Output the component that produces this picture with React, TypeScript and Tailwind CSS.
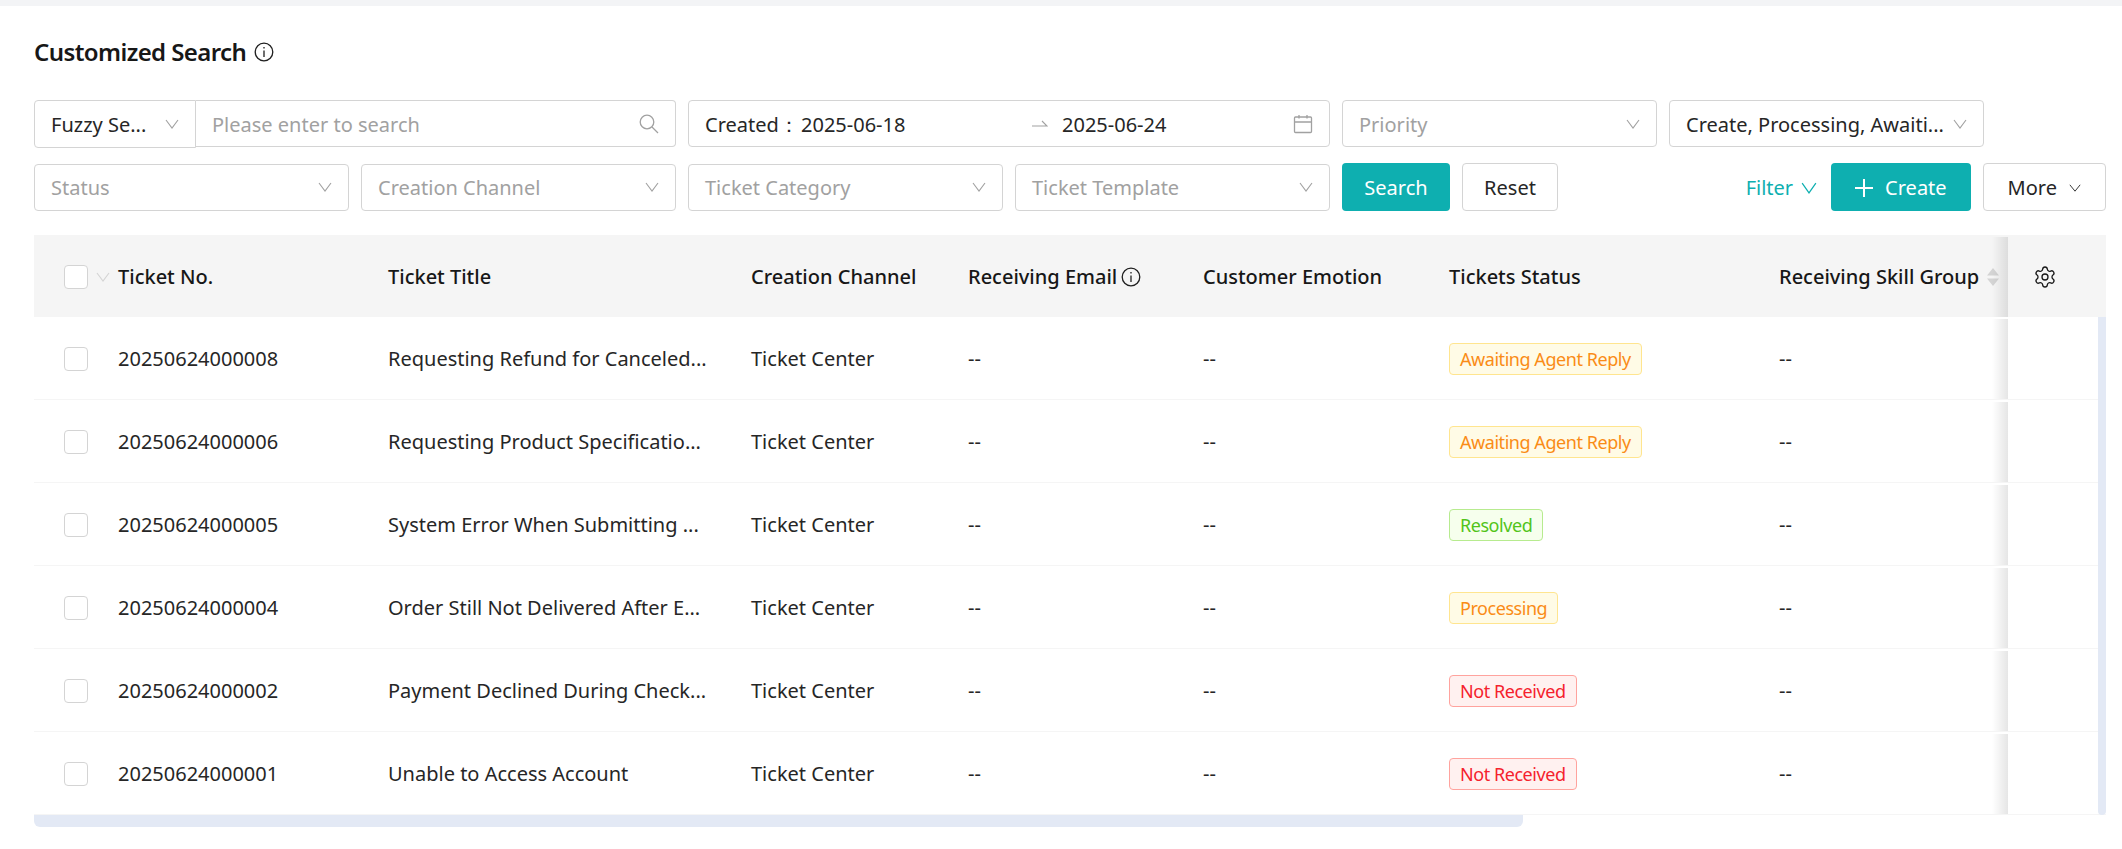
import { Settings } from "lucide-react";

const COLS = "grid grid-cols-[84px_270px_363px_217px_235px_246px_330px_229px_98px]";

function Chevron({ className = "h-2.5 w-3.5 text-neutral-400" }: { className?: string }) {
  return (
    <svg viewBox="0 0 14 10" preserveAspectRatio="none" className={"shrink-0 " + className} fill="none" stroke="currentColor" strokeWidth="1.1">
      <path d="M1 1 L7 9 L13 1" />
    </svg>
  );
}

function Info() {
  return (
    <svg viewBox="0 0 20 20" className="size-5 shrink-0" fill="none" stroke="#1f1f1f" strokeWidth="1.3">
      <circle cx="10" cy="10" r="8.8" />
      <path d="M10 8.5 V15" />
      <path d="M10 5 V6.6" />
    </svg>
  );
}

function Field({ text, placeholder = true }: { text: string; placeholder?: boolean }) {
  return (
    <div className="flex h-[47px] items-center gap-2 rounded border border-neutral-300 bg-white px-4 text-xl">
      <span className={"flex-1 whitespace-nowrap pt-0.5 " + (placeholder ? "text-neutral-400" : "text-neutral-800")}>{text}</span>
      <Chevron />
    </div>
  );
}

function Tag({ text, tone }: { text: string; tone: "warn" | "ok" | "bad" }) {
  const cls = {
    warn: "bg-[#fffbe6] border-[#ffe58f] text-[#fa8c16]",
    ok: "bg-[#f6ffed] border-[#b7eb8f] text-[#52c41a]",
    bad: "bg-[#fff1f0] border-[#ffa39e] text-[#f5222d]",
  }[tone];
  return <span className={"inline-flex h-8 items-center rounded-sm border px-2.5 text-lg tracking-tight " + cls}>{text}</span>;
}

const rows: { no: string; title: string; status: string; tone: "warn" | "ok" | "bad" }[] = [
  { no: "20250624000008", title: "Requesting Refund for Canceled...", status: "Awaiting Agent Reply", tone: "warn" },
  { no: "20250624000006", title: "Requesting Product Specificatio...", status: "Awaiting Agent Reply", tone: "warn" },
  { no: "20250624000005", title: "System Error When Submitting ...", status: "Resolved", tone: "ok" },
  { no: "20250624000004", title: "Order Still Not Delivered After E...", status: "Processing", tone: "warn" },
  { no: "20250624000002", title: "Payment Declined During Check...", status: "Not Received", tone: "bad" },
  { no: "20250624000001", title: "Unable to Access Account", status: "Not Received", tone: "bad" },
];

function StickyEdge() {
  return <span className="absolute inset-y-0 -left-4 w-4 bg-gradient-to-r from-transparent to-black/10" />;
}

export default function App() {
  return (
    <div className="min-h-screen bg-white font-['Noto_Sans',sans-serif] text-neutral-800">
      <div className="h-1.5 bg-gray-100" />
      <div className="pl-8.5 pr-4 pt-7.5">
        <div className="mb-8 flex h-8 items-center gap-2 text-2xl font-semibold tracking-tight text-neutral-900">
          <span>Customized Search</span>
          <Info />
        </div>

        <div className="grid grid-cols-[repeat(6,315px)_1fr] items-center gap-x-3 gap-y-4">
          <div className="col-span-2 flex h-[47px] items-start">
            <div className="flex h-12 w-[162px] shrink-0 items-center gap-2 rounded-l border border-neutral-300 px-4 text-xl">
              <span className="flex-1 whitespace-nowrap pt-0.5">Fuzzy Se...</span>
              <Chevron />
            </div>
            <div className="flex h-[47px] flex-1 items-center rounded-r border border-l-0 border-neutral-300 px-4 text-xl">
              <span className="flex-1 pt-0.5 text-neutral-400">Please enter to search</span>
              <svg viewBox="0 0 20 20" className="size-5 shrink-0 text-neutral-400" fill="none" stroke="currentColor" strokeWidth="1.3">
                <circle cx="8" cy="8" r="6.8" />
                <path d="M13 13 L19 19" />
              </svg>
            </div>
          </div>

          <div className="col-span-2 flex h-[47px] items-center rounded border border-neutral-300 px-4 text-xl">
            <span className="w-24 shrink-0 pt-0.5">Created：</span>
            <span className="flex-1 pt-0.5">2025-06-18</span>
            <svg viewBox="0 0 16 8" className="mr-3.5 h-2 w-4 shrink-0 text-neutral-400" fill="none" stroke="currentColor" strokeWidth="1.1">
              <path d="M0 6 H15 L10 1" />
            </svg>
            <span className="flex-1 pt-0.5">2025-06-24</span>
            <svg viewBox="0 0 20 20" className="size-5 shrink-0 text-neutral-400" fill="none" stroke="currentColor" strokeWidth="1.3">
              <rect x="1.5" y="3" width="17" height="15.5" rx="1" />
              <path d="M1.5 8 H18.5 M6 1 V4.5 M14 1 V4.5" />
            </svg>
          </div>

          <Field text="Priority" />
          <Field text="Create, Processing, Awaiti..." placeholder={false} />
          <div />

          <Field text="Status" />
          <Field text="Creation Channel" />
          <Field text="Ticket Category" />
          <Field text="Ticket Template" />

          <div className="flex h-12 gap-3 text-xl">
            <button className="w-27 rounded bg-[#0eafb0] pt-0.5 text-white">Search</button>
            <button className="w-24 rounded border border-neutral-300 bg-white pt-0.5">Reset</button>
          </div>

          <div className="col-span-2 flex h-12 items-center justify-end gap-3 text-xl">
            <span className="mr-0.5 flex items-center gap-2 pt-0.5 text-[#0eafb0]">
              Filter
              <Chevron className="h-3 w-4 text-[#0eafb0]" />
            </span>
            <button className="flex h-12 items-center justify-center gap-3 rounded bg-[#0eafb0] px-6 pt-0.5 text-white">
              <svg viewBox="0 0 16 16" className="size-4.5 shrink-0" fill="none" stroke="currentColor" strokeWidth="1.8">
                <path d="M8 0 V16 M0 8 H16" />
              </svg>
              Create
            </button>
            <button className="flex h-12 items-center justify-center gap-3 rounded border border-neutral-300 bg-white px-6 pt-0.5">
              More
              <Chevron className="h-2 w-3 text-neutral-800" />
            </button>
          </div>
        </div>

        <div className="mt-6">
          <div className={COLS + " h-[82px] items-center bg-neutral-100 pt-0.5 text-xl font-medium text-neutral-900"}>
            <div className="flex items-center gap-2 pl-7.5">
              <span className="size-6 shrink-0 rounded border border-neutral-300 bg-white" />
              <Chevron className="h-2.5 w-3.5 text-neutral-300" />
            </div>
            <div>Ticket No.</div>
            <div>Ticket Title</div>
            <div>Creation Channel</div>
            <div className="flex items-center gap-1">
              Receiving Email <Info />
            </div>
            <div>Customer Emotion</div>
            <div>Tickets Status</div>
            <div className="flex items-center gap-2 whitespace-nowrap">
              Receiving Skill Group
              <svg viewBox="0 0 12 18" className="h-4.5 w-3 shrink-0 text-neutral-300" fill="currentColor">
                <path d="M6 0 L12 7.5 H0 Z M0 10.5 H12 L6 18 Z" />
              </svg>
            </div>
            <div className="relative flex h-full items-center justify-center pr-6">
              <StickyEdge />
              <Settings className="size-6" strokeWidth={1.3} />
            </div>
          </div>

          <div className="relative">
            {rows.map((r) => (
              <div key={r.no} className={COLS + " h-[83px] items-center border-b border-neutral-100 pt-0.5 text-xl"}>
                <div className="pl-7.5">
                  <span className="block size-6 rounded border border-neutral-300 bg-white" />
                </div>
                <div>{r.no}</div>
                <div className="whitespace-nowrap">{r.title}</div>
                <div>Ticket Center</div>
                <div>--</div>
                <div>--</div>
                <div>
                  <Tag text={r.status} tone={r.tone} />
                </div>
                <div>--</div>
                <div className="relative h-full">
                  <StickyEdge />
                </div>
              </div>
            ))}
            <div className="absolute inset-y-0 right-0 w-2 rounded-b bg-[#e3e9f5]" />
          </div>
          <div className="h-3 w-[1489px] rounded-b-md bg-[#e3e9f5]" />
        </div>
      </div>
    </div>
  );
}
